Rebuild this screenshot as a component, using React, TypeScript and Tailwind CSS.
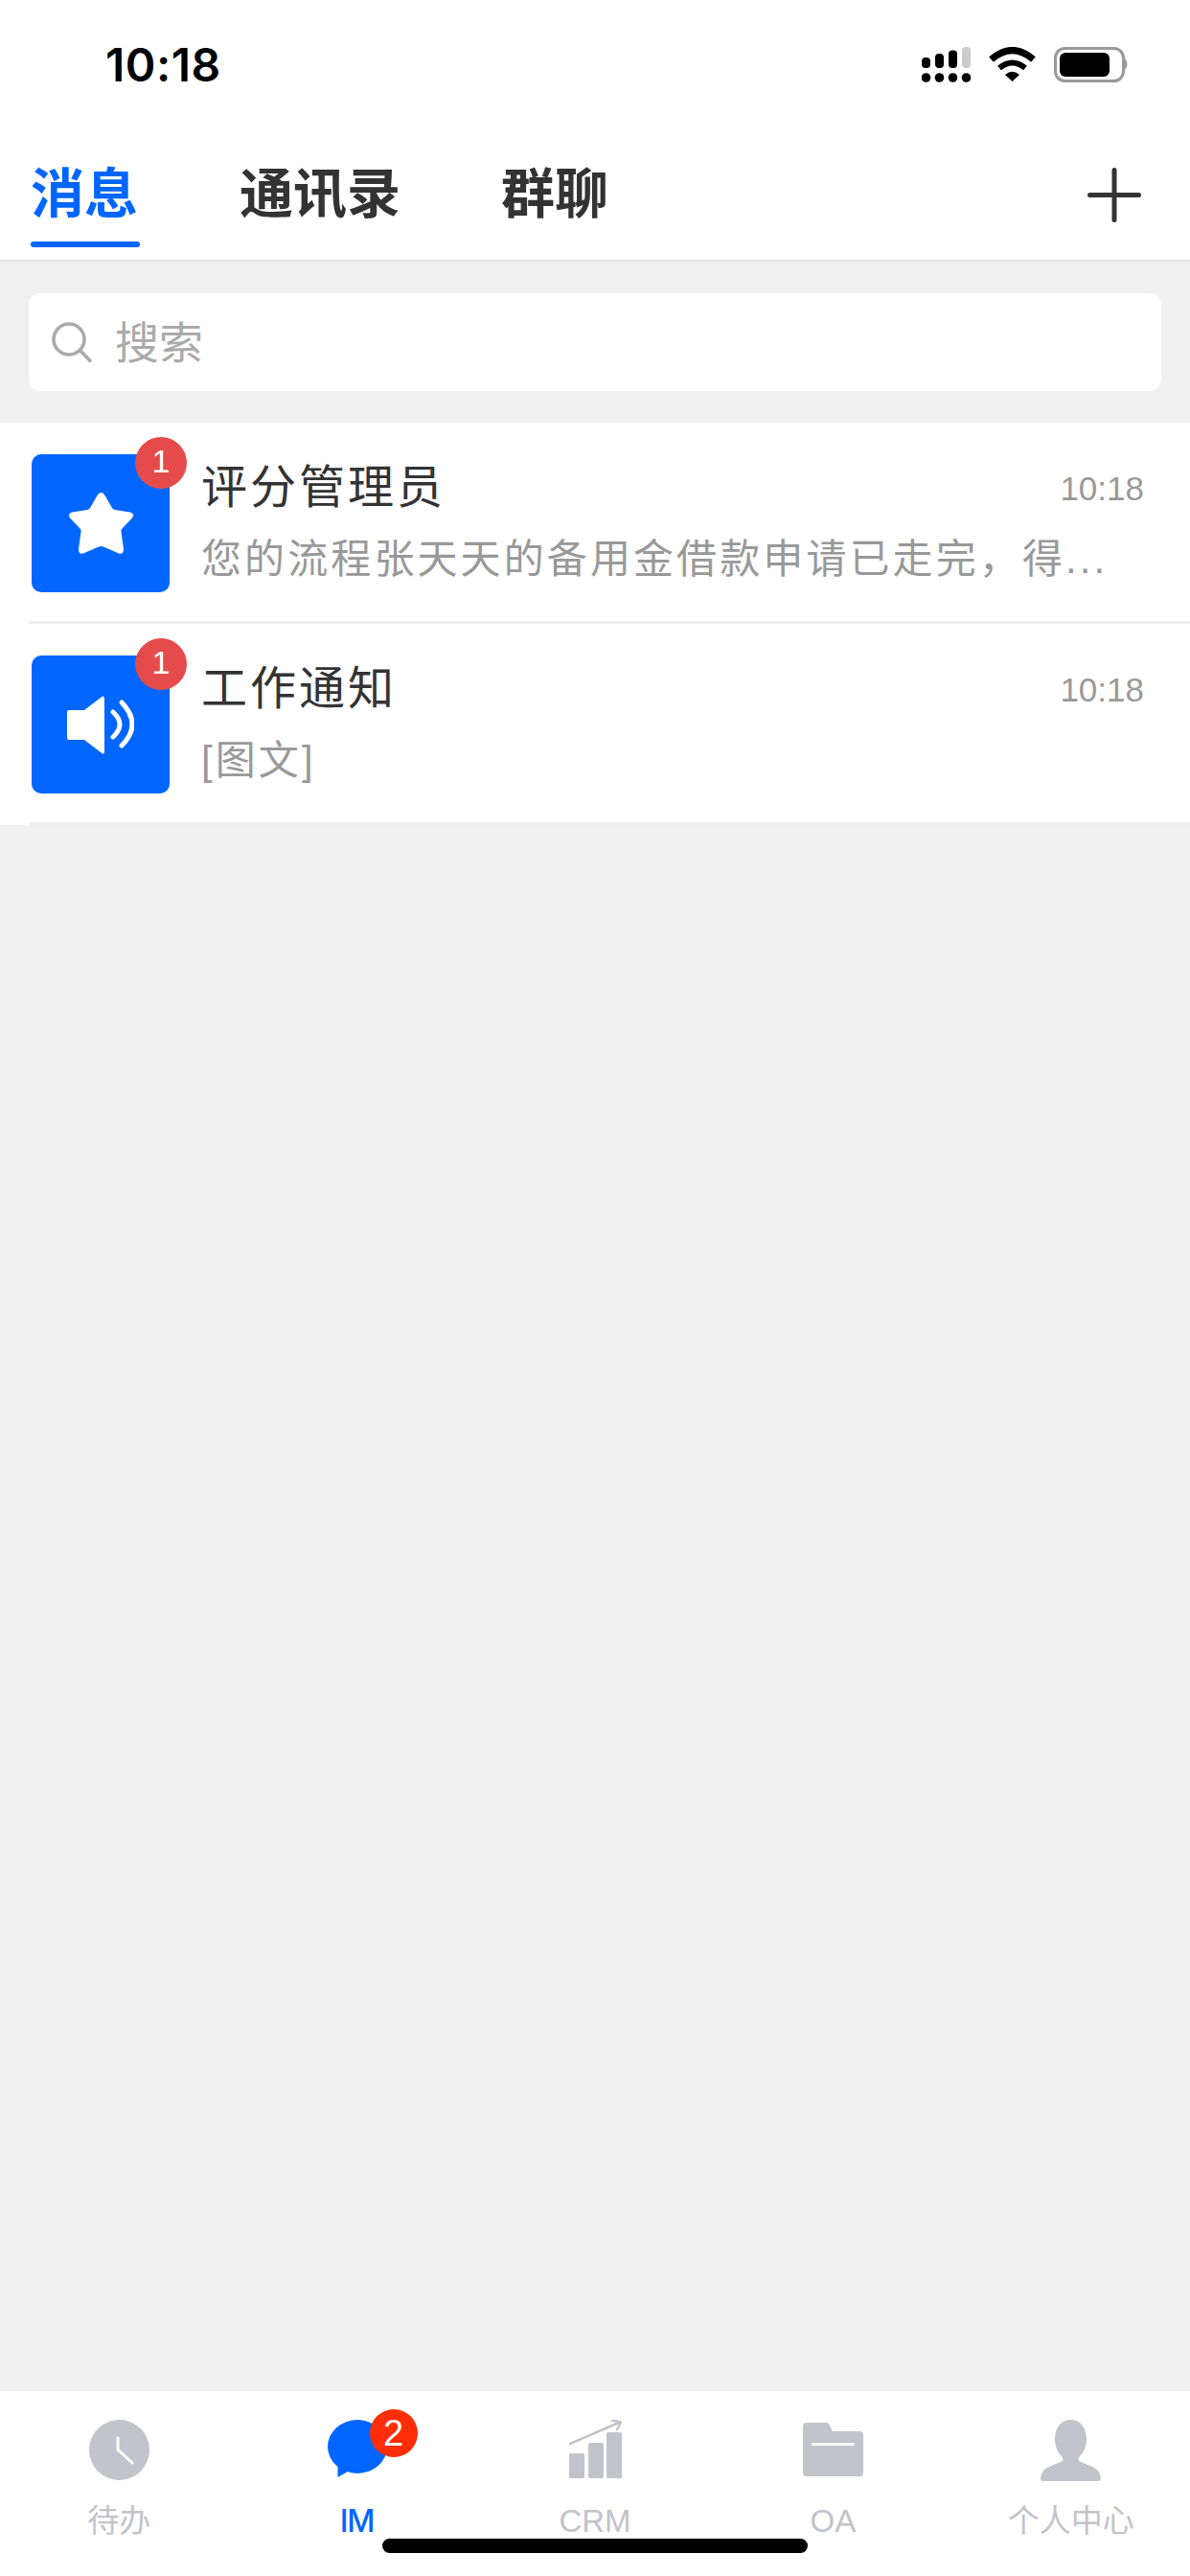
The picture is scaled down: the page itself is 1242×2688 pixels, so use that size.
const cjk = "font-['Liberation_Sans','Noto_Sans_CJK_SC',sans-serif]";

function StatusBar() {
  return (
    <div className="h-[135px] flex items-start justify-between pt-[44px] pl-[110px] pr-[63px]">
      <span className="font-['Inter',sans-serif] text-[48px] leading-[48px] font-semibold text-black tracking-[0.5px]">10:18</span>
      <div className="flex items-start gap-[19px] pt-[5px]">
        <svg width="51" height="37" viewBox="0 0 51 37" fill="#000">
          <rect x="0" y="11" width="9" height="11" rx="4" />
          <rect x="14" y="7" width="9" height="15" rx="4" />
          <rect x="28" y="3.500" width="9" height="18.500" rx="4" />
          <rect x="42" y="0" width="9" height="22" rx="4" fill="#ccc" />
          <circle cx="4.500" cy="32" r="4.800" />
          <circle cx="18.500" cy="32" r="4.800" />
          <circle cx="32.500" cy="32" r="4.800" />
          <circle cx="46.500" cy="32" r="4.800" />
        </svg>
        <svg width="49" height="36" viewBox="0 0 49 36">
          <path d="M2.500 13 Q24.500 -6 46.500 13" fill="none" stroke="#000" strokeWidth="7" />
          <path d="M11 22 Q24.500 11 38 22" fill="none" stroke="#000" strokeWidth="6" />
          <path d="M17 29 Q24.500 22.500 32 29 L24.500 36Z" fill="#000" />
        </svg>
        <svg width="79" height="37" viewBox="0 0 79 37">
          <rect x="1.500" y="1.500" width="71" height="34" rx="10" fill="none" stroke="#999" strokeWidth="3" />
          <rect x="6" y="6" width="52" height="25" rx="6" fill="#000" />
          <path d="M74 12 Q79 18 74 24Z" fill="#999" />
        </svg>
      </div>
    </div>
  );
}

function Tabs() {
  return (
    <div className="h-[138px] bg-white border-b-[2px] border-[#e4e4e4] flex items-start pt-[35px] pl-[32px] pr-[51px] relative">
      <div className="mr-[106px]">
        <span className="text-[56px] leading-[66px] font-bold text-[#0066ff]">消息</span>
        <div className="absolute left-[32px] bottom-[13px] w-[114px] h-[6px] rounded-full bg-[#0066ff]" />
      </div>
      <span className="text-[56px] leading-[66px] font-bold text-[#333] mr-[105px]">通讯录</span>
      <span className="text-[56px] leading-[66px] font-bold text-[#333]">群聊</span>
      <svg className="ml-auto mt-[5px]" width="56" height="57" viewBox="0 0 56 57" fill="#333">
        <rect x="25.500" y="0" width="5" height="57" rx="2.500" />
        <rect x="0" y="26" width="56" height="5" rx="2.500" />
      </svg>
    </div>
  );
}

function Row({ title, sub, icon }: { title: string; sub: string; icon: React.ReactNode }) {
  return (
    <div className="relative h-[210px] pl-[33px] flex">
      <div className="relative w-[144px] h-[144px] mt-[33px] rounded-[10px] bg-[#0066ff] flex items-center justify-center shrink-0">
        {icon}
        <div className="absolute -top-[18px] -right-[18px] w-[54px] h-[54px] rounded-full bg-[#e64b4b] text-white text-[34px] leading-[50px] text-center">1</div>
      </div>
      <div className="ml-[33px] flex-1 min-w-0 pr-[48px] pt-[36px]">
        <div className="flex justify-between items-center">
          <span className="text-[48px] leading-[64px] tracking-[3px] text-[#333]">{title}</span>
          <span className="text-[35px] leading-[48px] text-[#999] mt-[2px]">10:18</span>
        </div>
        <div className="mt-[15px] text-[42px] leading-[56px] tracking-[3.1px] text-[#999] whitespace-nowrap overflow-hidden">{sub}</div>
      </div>
      <div className="absolute left-[30px] right-0 bottom-0 h-[3px] bg-[#eeeeee]" />
    </div>
  );
}

function TabItem({ label, active, children }: { label: string; active?: boolean; children: React.ReactNode }) {
  return (
    <div className="flex-1 flex flex-col items-center">
      <div className="h-[64px] flex items-start justify-center relative">{children}</div>
      <span className={active ? "mt-[20px] font-['Inter',sans-serif] text-[32px] leading-[44px] tracking-[-1px] text-[#0066ff] font-medium" : "mt-[20px] text-[33px] leading-[44px] text-[#c2c3cb]"}>{label}</span>
    </div>
  );
}

export default function App() {
  return (
    <div className={`w-[1242px] h-[2688px] bg-[#f0f0f0] flex flex-col relative overflow-hidden ${cjk}`}>
      <div className="bg-white">
        <StatusBar />
      </div>
      <Tabs />
      <div className="px-[30px] py-[33px]">
        <div className="h-[102px] bg-white rounded-[12px] flex items-center pl-[24px]">
          <svg width="42" height="42" viewBox="0 0 42 42" fill="none" stroke="#aaa" strokeWidth="3.500" strokeLinecap="round">
            <circle cx="18" cy="18" r="16" />
            <path d="M29.500 29.500 L40 40.500" />
          </svg>
          <span className="ml-[24px] text-[46px] leading-[56px] text-[#aaa] mt-[2px]">搜索</span>
        </div>
      </div>
      <div className="bg-white">
        <Row
          title="评分管理员"
          sub="您的流程张天天的备用金借款申请已走完，得..."
          icon={
            <svg width="69" height="66" viewBox="0 0 69 66" fill="#fff">
              <path d="M34.500 1 Q37 1 38.500 4 L46 17 Q47 18.500 49 19 L65 21.500 Q70 23 67 27.500 L56.500 38.500 Q55 40 55.500 42 L58 60 Q58 66 53 64.500 L37 57.500 Q34.500 56.500 32 57.500 L16 64.500 Q11 66 11 60 L13.500 42 Q14 40 12.500 38.500 L2 27.500 Q-1 23 4 21.500 L20 19 Q22 18.500 23 17 L30.500 4 Q32 1 34.500 1Z" />
            </svg>
          }
        />
        <Row
          title="工作通知"
          sub="[图文]"
          icon={
            <svg width="70" height="61" viewBox="0 0 70 61" fill="#fff">
              <path d="M2 15 H18 L37 0.500 Q39 0 39 3 V58 Q39 61 37 60.500 L18 46 H2 Q0 46 0 44 V17 Q0 15 2 15Z" />
              <path d="M48 17 Q62 30 48 43" fill="none" stroke="#fff" strokeWidth="5" strokeLinecap="round" />
              <path d="M57 7 Q79 30 57 52" fill="none" stroke="#fff" strokeWidth="5" strokeLinecap="round" />
            </svg>
          }
        />
      </div>
      <div className="mt-auto h-[193px] bg-white flex pt-[30px]">
        <TabItem label="待办">
          <svg width="63" height="63" viewBox="0 0 63 63">
            <circle cx="31.500" cy="31.500" r="31.500" fill="#c2c3cb" />
            <path d="M30 19 L30 31 L45 45" fill="none" stroke="#fff" strokeWidth="3" strokeLinecap="round" />
          </svg>
        </TabItem>
        <TabItem label="IM" active>
          <svg width="62" height="60" viewBox="0 0 62 60" fill="#0066ff">
            <ellipse cx="31" cy="28" rx="31" ry="28" />
            <path d="M10.500 48 L10.500 60 L21 54Z" />
          </svg>
          <div className="absolute -top-[11px] left-[44px] w-[50px] h-[50px] rounded-full bg-[#ff2d08] text-white text-[38px] leading-[50px] text-center">2</div>
        </TabItem>
        <TabItem label="CRM">
          <svg width="55" height="61" viewBox="0 0 55 61" fill="#c2c3cb">
            <rect x="0" y="35" width="16" height="26" rx="1.500" />
            <rect x="20" y="24" width="16" height="37" rx="1.500" />
            <rect x="39" y="13" width="16" height="48" rx="1.500" />
            <path d="M1 25 L53 2.500" stroke="#c2c3cb" strokeWidth="2.500" strokeLinecap="round" fill="none" />
            <path d="M45 0.500 L54 2.500 L50 10" stroke="#c2c3cb" strokeWidth="2.500" strokeLinecap="round" fill="none" />
          </svg>
        </TabItem>
        <TabItem label="OA">
          <div className="pt-[3px]">
            <svg width="63" height="56" viewBox="0 0 63 56" fill="#c2c3cb">
              <path d="M4 0 H24 Q27 0 28 3 L31 9 H59 Q63 9 63 13 V52 Q63 56 59 56 H4 Q0 56 0 52 V4 Q0 0 4 0Z" />
              <rect x="9" y="21" width="45" height="3" rx="1.500" fill="#fff" />
            </svg>
          </div>
        </TabItem>
        <TabItem label="个人中心">
          <svg width="63" height="64" viewBox="0 0 63 64" fill="#c2c3cb">
            <path d="M31.500 0 C42 0 48 9 48 20 C48 28 45 34 41 38 Q39 40 40 43 L56 50 Q62 53 63 61 Q63 64 60 64 H3 Q0 64 0 61 Q1 53 7 50 L23 43 Q24 40 22 38 C18 34 15 28 15 20 C15 9 21 0 31.500 0Z" />
          </svg>
        </TabItem>
      </div>
      <div className="absolute left-[399px] bottom-[24px] w-[444px] h-[15px] rounded-full bg-black" />
    </div>
  );
}
